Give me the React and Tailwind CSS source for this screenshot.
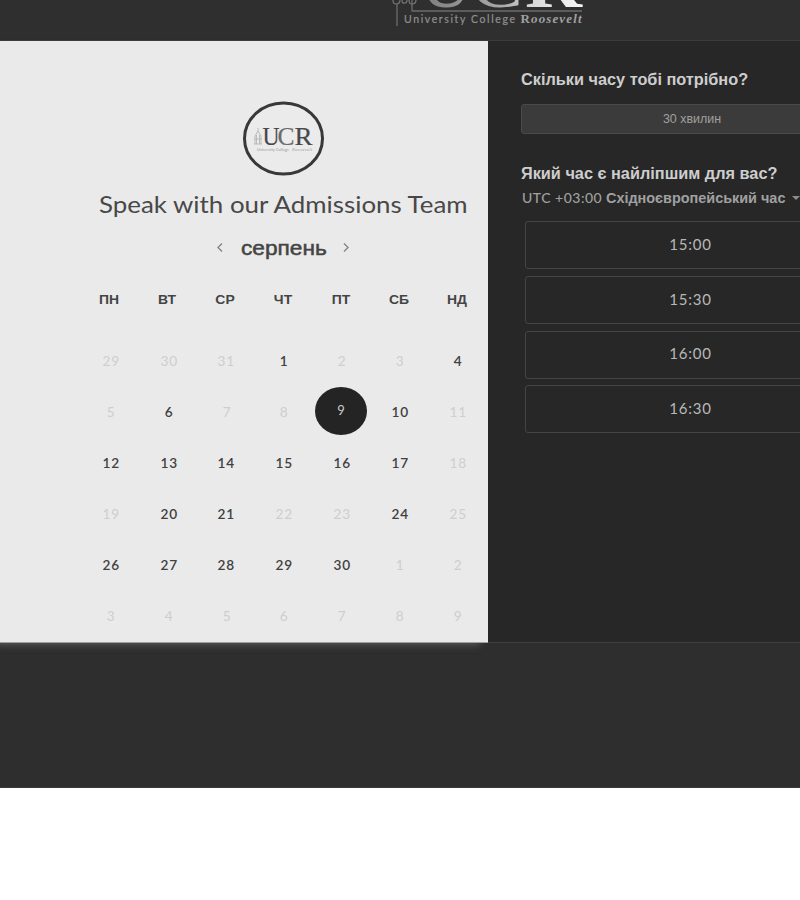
const weekdays = ['ПН', 'ВТ', 'СР', 'ЧТ', 'ПТ', 'СБ', 'НД'];

const weeks = [
  [29, 30, 31, 1, 2, 3, 4],
  [5, 6, 7, 8, 9, 10, 11],
  [12, 13, 14, 15, 16, 17, 18],
  [19, 20, 21, 22, 23, 24, 25],
  [26, 27, 28, 29, 30, 1, 2],
  [3, 4, 5, 6, 7, 8, 9],
];

const open = [
  [3, 6],
  [1, 5],
  [0, 1, 2, 3, 4, 5],
  [1, 2, 5],
  [0, 1, 2, 3, 4],
  [],
];

const times = ['15:00', '15:30', '16:00', '16:30'];

function HeaderLogo() {
  return (
    <svg className="ml-[388px] block" width="200" height="30" viewBox="0 0 200 30">
      <defs>
        <linearGradient id="metal" gradientUnits="userSpaceOnUse" x1="38" x2="190" y1="0" y2="0">
          <stop offset="0" stopColor="#808080" />
          <stop offset="0.5" stopColor="#a8a8a8" />
          <stop offset="0.7" stopColor="#d8d8d8" />
          <stop offset="1" stopColor="#f4f4f4" />
        </linearGradient>
      </defs>
      <g fill="url(#metal)" fontFamily="Liberation Serif, serif" fontSize="70">
        <text x="32" y="7" textLength="52" lengthAdjust="spacingAndGlyphs">U</text>
        <text x="82" y="7" textLength="53" lengthAdjust="spacingAndGlyphs">C</text>
        <text x="137" y="7" fontWeight="bold" textLength="57" lengthAdjust="spacingAndGlyphs">R</text>
      </g>
      <path d="M9 4V26M24 0V11H194" fill="none" stroke="#6c6c6c" strokeWidth="1.3" />
      <path d="M5 0q0 4 3 4q4 0 4 -4M14 0q0 4 3 3q2 0 2 -3M21 0q0 4 3 4q4 0 4 -4" fill="none" stroke="#777777" strokeWidth="1.2" />
      <text x="16" y="23.2" fill="#909090" stroke="#909090" strokeWidth="0.2" fontFamily="Lato, sans-serif" fontSize="10.5" textLength="111">University College</text>
      <text x="132.5" y="23.2" fill="#a0a0a0" fontFamily="Liberation Serif, serif" fontSize="13" fontWeight="bold" textLength="61">
        R<tspan fontStyle="italic">oosevelt</tspan>
      </text>
    </svg>
  );
}

function RoundLogo() {
  return (
    <svg className="ml-[161px] block" width="82" height="76" viewBox="0 0 82 76">
      <ellipse cx="40.5" cy="37.5" rx="39" ry="35.5" fill="#ebebeb" stroke="#383838" strokeWidth="3" />
      <path d="M12 43V35L15 30L18 35V43M13.5 43V34M16.5 43V34M11 38H19M15 30V27M11 43H19" fill="none" stroke="#b5b5b5" strokeWidth="0.9" />
      <g fill="#484848" stroke="#484848" strokeWidth="0.2" fontFamily="Liberation Serif, serif" fontSize="25">
        <text x="19.5" y="43.5" textLength="17" lengthAdjust="spacingAndGlyphs">U</text>
        <text x="34.5" y="43.5" fill="#6a6a6a" stroke="#6a6a6a" textLength="17" lengthAdjust="spacingAndGlyphs">C</text>
        <text x="51.5" y="43.5" textLength="18" lengthAdjust="spacingAndGlyphs">R</text>
      </g>
      <text x="14" y="49.5" fill="#999999" fontFamily="Lato, sans-serif" fontSize="4" textLength="32">University College</text>
      <text x="49" y="49.5" fill="#999999" fontFamily="Liberation Serif, serif" fontStyle="italic" fontSize="4.5" textLength="20">Roosevelt</text>
    </svg>
  );
}

function Chevron({ d }) {
  return (
    <svg width="8" height="12" viewBox="0 0 8 12" fill="none" stroke="#858585" strokeWidth="1.4">
      <path d={d} />
    </svg>
  );
}

function Day({ value, available, selected }) {
  if (selected) {
    return (
      <div className="flex h-[51px] items-center justify-center">
        <span className="-ml-[2px] -mt-[3px] flex h-[48px] w-[52px] shrink-0 items-center justify-center rounded-[50%] bg-[#242424] text-[13px] text-[#c9c9c9]">{value}</span>
      </div>
    );
  }
  return (
    <div className={available ? 'flex h-[51px] items-center justify-center font-semibold text-[#404040]' : 'flex h-[51px] items-center justify-center text-[#cecece]'}>
      <span className="scale-x-105">{value}</span>
    </div>
  );
}

export default function App() {
  return (
    <div className="h-[900px] w-[800px] overflow-hidden bg-white font-['Liberation_Sans',Arial,sans-serif]">
      <div className="h-[788px] overflow-hidden border-b border-[#3c383b] bg-[#2e2e2e]">
        <header className="h-[41px] border-b border-[#3b3b3b] bg-[#2f2f2f]">
          <HeaderLogo />
        </header>
        <main className="flex h-[602px]">
          <section className="w-[488px] shrink-0 border-b border-[#a0a0a0] bg-[#eaeaea] pl-[82px] pt-[60px] shadow-[-6px_4px_7px_-2px_#5a5a5a]">
            <div className="w-[405px]">
              <RoundLogo />
              <h1 className="ml-[17px] mt-[11px] h-8 w-max origin-left scale-x-[1.125] whitespace-nowrap font-['Lato',sans-serif] text-[23px] leading-8 text-[#484848]">Speak with our Admissions Team</h1>
              <div className="-ml-[3px] mt-3 flex h-8 items-center justify-center gap-[17px]">
                <Chevron d="M6 1.5L2 5.5L6 9.5" />
                <h2 className="w-[84px] origin-left scale-x-[1.08] text-[21px] leading-8 text-[#444444] [-webkit-text-stroke:0.5px_#444444]">серпень</h2>
                <Chevron d="M2 1.5L6 5.5L2 9.5" />
              </div>
              <div className="-ml-[2px] mr-[1px] mt-[20px] grid h-8 grid-cols-7 items-center text-center text-[13px] font-bold text-[#444444]">
                {weekdays.map((d) => <span key={d} className="scale-x-[1.07]">{d}</span>)}
              </div>
              <div className="mt-[20px] grid grid-cols-7 font-['Lato',sans-serif] text-[13px] tracking-[0.6px]">
                {weeks.flatMap((week, r) => week.map((value, c) => (
                  <Day key={r * 7 + c} value={value} available={open[r].includes(c)} selected={r === 1 && c === 4} />
                )))}
              </div>
            </div>
          </section>
          <section className="w-[350px] shrink-0 border-b border-[#3e3e3e] bg-[#272727] pl-[33px]">
            <h3 className="mt-[27px] h-6 w-max origin-left scale-x-[1.018] whitespace-nowrap text-[16px] font-bold leading-6 text-[#cecece]">Скільки часу тобі потрібно?</h3>
            <div className="mt-3 flex h-[30px] w-[343px] items-center justify-center rounded-[3px] border border-[#4a4a4a] bg-[#3b3b3b] text-[12px] text-[#a0a0a0]"><span className="scale-x-[1.04]">30 хвилин</span></div>
            <h3 className="mt-[28px] h-6 w-max origin-left scale-x-[1.018] whitespace-nowrap text-[16px] font-bold leading-6 text-[#cecece]">Який час є найліпшим для вас?</h3>
            <div className="flex h-6 items-center whitespace-nowrap text-[14px] font-bold text-[#a0a0a0]">
              <span className="-mt-[2px] ml-[1px] w-[84px] font-['Lato',sans-serif] text-[14px] font-medium tracking-[0.5px]">UTC +03:00</span>
              <span className="w-[180px] origin-left scale-x-[1.03]">Східноєвропейський час</span>
              <svg className="ml-1.5 shrink-0" width="8" height="4" viewBox="0 0 8 4"><path d="M0 0H8L4 4Z" fill="#8c8c8c" /></svg>
            </div>
            <div className="ml-1 mt-[11px] flex w-[331px] flex-col gap-[6.8px]">
              {times.map((t) => (
                <div key={t} className="flex h-[48px] items-center justify-center rounded-[3px] border border-[#454545] pb-[2px] font-['Lato',sans-serif] text-[15px] tracking-[0.8px] text-[#b8b8b8]">{t}</div>
              ))}
            </div>
          </section>
        </main>
      </div>
    </div>
  );
}
